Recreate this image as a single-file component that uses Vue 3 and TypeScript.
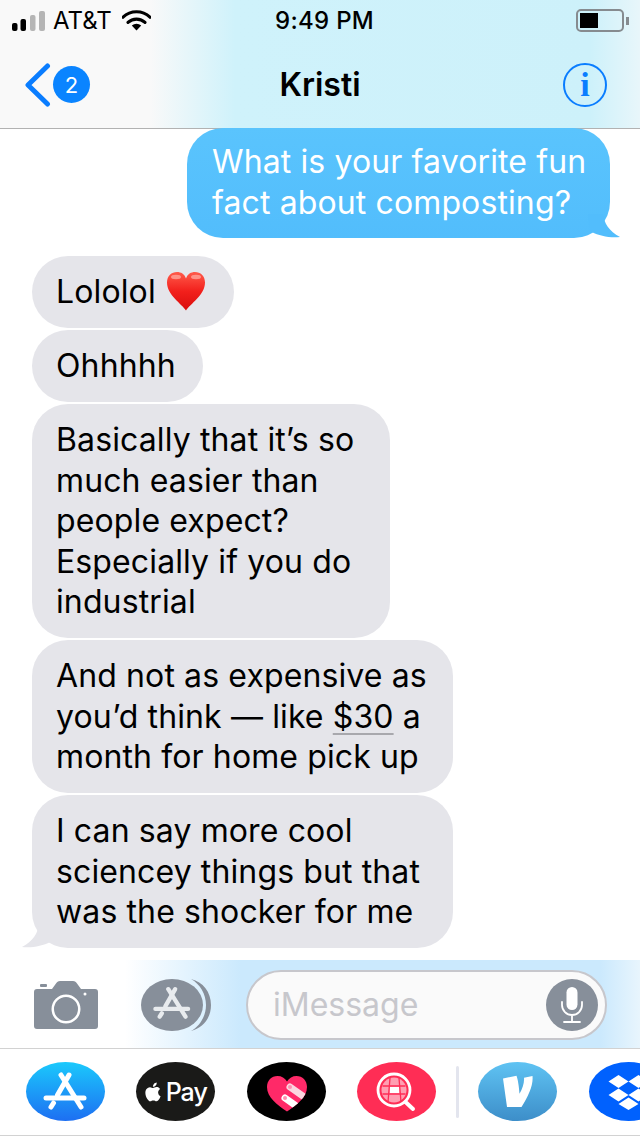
<template>
  <div class="phone">
    <header class="top">
      <div class="status">
        <div class="status-left">
          <svg class="signal" width="34" height="20" viewBox="0 0 34 20">
            <rect x="0" y="12" width="5.500" height="8" rx="2" fill="#000" />
            <rect x="8.500" y="8" width="5.500" height="12" rx="2" fill="#000" />
            <rect x="18" y="4" width="5.500" height="16" rx="2" fill="#b5b5b5" />
            <rect x="27" y="0" width="6" height="20" rx="2" fill="#b5b5b5" />
          </svg>
          <span class="carrier">AT&amp;T</span>
          <svg class="wifi" width="29" height="21" viewBox="0 0 29 21">
            <path d="M1 7.200a19.500 19.500 0 0 1 27 0" fill="none" stroke="#000" stroke-width="3.200" stroke-linecap="round" />
            <path d="M6 12.400a12.400 12.400 0 0 1 17 0" fill="none" stroke="#000" stroke-width="3.200" stroke-linecap="round" />
            <path d="M9.800 15.600a7 7 0 0 1 9.400 0L14.500 20.600z" fill="#000" />
          </svg>
        </div>
        <span class="time">9:49 PM</span>
        <div class="battery">
          <div class="battery-body"><div class="battery-fill" /></div>
          <div class="battery-nub" />
        </div>
      </div>
      <nav class="nav">
        <div class="back">
          <svg width="28" height="44" viewBox="0 0 28 44">
            <path d="M23.500 3 4 22l19.500 19" fill="none" stroke="#0a7dff" stroke-width="5" stroke-linecap="round" stroke-linejoin="round" />
          </svg>
          <span class="badge">2</span>
        </div>
        <div class="name">Kristi</div>
        <div class="info"><span>i</span></div>
      </nav>
    </header>

    <main class="thread">
      <div class="bubble sent">
        What is your favorite fun<br />fact about composting?
        <svg class="tail tail-right" width="32" height="24" viewBox="0 0 32 24">
          <path d="M0 0h15c1 9 6 17 17 23C22 24 11 22 4 18 2 16 0 8 0 0z" fill="#52bdfc" />
        </svg>
      </div>
      <div class="bubble got first">
        Lololol
        <svg class="heart" width="40" height="40" viewBox="0 0 40 40">
          <defs>
            <linearGradient id="heartFill" x1="0" y1="0" x2="0" y2="1">
              <stop offset="0" stop-color="#ff5a4a" />
              <stop offset="0.500" stop-color="#f2201c" />
              <stop offset="1" stop-color="#d90d0d" />
            </linearGradient>
          </defs>
          <path d="M20 39.500C16 33 1 24 1 11.500 1 5 5.500 1 11 1c4 0 7.500 2 9 6.500C21.500 3 25 1 29 1c5.500 0 10 4 10 10.500C39 24 24 33 20 39.500z" fill="url(#heartFill)" />
          <ellipse cx="10" cy="6" rx="5" ry="2.200" fill="#ffb0a6" opacity="0.700" />
          <ellipse cx="30" cy="6" rx="5" ry="2.200" fill="#ffb0a6" opacity="0.700" />
        </svg>
      </div>
      <div class="bubble got ohh">Ohhhhh</div>
      <div class="bubble got basically">
        Basically that it’s so<br />much easier than<br />people expect?<br />Especially if you do<br />industrial
      </div>
      <div class="bubble got wide">
        And not as expensive as<br />you’d think — like <span class="link">$30</span> a<br />month for home pick up
      </div>
      <div class="bubble got wide">
        I can say more cool<br />sciencey things but that<br />was the shocker for me
        <svg class="tail tail-left" width="32" height="24" viewBox="0 0 32 24">
          <path d="M32 0H17c-1 9-6 17-17 23 10 1 21-1 28-5 2-2 4-10 4-18z" fill="#e5e5ea" />
        </svg>
      </div>
    </main>

    <section class="composer">
      <svg class="camera" width="64" height="48" viewBox="0 0 64 48">
        <rect x="6" y="3" width="7" height="3" rx="1" fill="#878f9a" />
        <path fill-rule="evenodd" fill="#878f9a" d="M3 8h15l4-5.500C23 1 24 0 26 0h13c2 0 3 1 4 2.500L47 8h14a3 3 0 0 1 3 3v34a3 3 0 0 1-3 3H3a3 3 0 0 1-3-3V11a3 3 0 0 1 3-3zm29 5.500a14.500 14.500 0 1 0 0 29 14.500 14.500 0 0 0 0-29zm0 2.500a12 12 0 1 1 0 24 12 12 0 0 1 0-24zM51 11.500a1.500 1.500 0 1 0 0 3 1.500 1.500 0 0 0 0-3z" />
      </svg>
      <div class="apps-btn">
        <svg width="72" height="54" viewBox="0 0 72 54">
          <path d="M50 1c12 3 20 13 20 26S62 50 50 53c9-5 15-15 15-26S59 6 50 1z" fill="#878f9a" />
          <ellipse cx="31" cy="27" rx="31" ry="26" fill="#878f9a" />
          <g transform="translate(-2.800 0) scale(0.860)" stroke="#e8ebee" fill="none" stroke-linecap="round">
            <use href="#storeMark" />
          </g>
        </svg>
      </div>
      <div class="input">
        <span>iMessage</span>
        <div class="mic">
          <svg width="26" height="38" viewBox="0 0 26 38">
            <rect x="7.500" y="1" width="11" height="23" rx="5.500" fill="#fff" />
            <path d="M3 16v3a10 10 0 0 0 20 0v-3M13 29v7M5 36h16" fill="none" stroke="#fff" stroke-width="1.800" stroke-linecap="round" />
          </svg>
        </div>
      </div>
    </section>

    <section class="drawer">
      <div class="app store">
        <svg width="79" height="59" viewBox="0 0 79 59" stroke="#fff" fill="none" stroke-linecap="round">
          <g id="storeMark">
            <path d="M43 13 31.500 33" stroke-width="5" />
            <path d="M27.500 41 25 45" stroke-width="5" />
            <path d="M35 13l20 32" stroke-width="5" />
            <path d="M20 36h38" stroke-width="5" />
          </g>
        </svg>
      </div>
      <div class="app pay">
        <svg width="17" height="20" viewBox="3 1 18 22">
          <path fill="#fff" d="M17.050 12.540c-.03-2.600 2.130-3.850 2.220-3.910-1.210-1.770-3.100-2.010-3.770-2.040-1.600-.16-3.130.94-3.940.94-.81 0-2.070-.92-3.400-.89-1.750.03-3.360 1.020-4.260 2.580-1.820 3.150-.47 7.820 1.300 10.380.87 1.250 1.900 2.660 3.250 2.610 1.310-.05 1.800-.84 3.380-.84 1.580 0 2.020.84 3.400.82 1.400-.03 2.290-1.280 3.150-2.540.99-1.450 1.400-2.860 1.420-2.930-.03-.01-2.720-1.040-2.750-4.180zM14.450 4.890c.72-.87 1.200-2.080 1.070-3.290-1.040.04-2.300.69-3.040 1.560-.67.77-1.250 2-1.090 3.180 1.160.09 2.340-.59 3.060-1.450z" />
        </svg>
        <span>Pay</span>
      </div>
      <div class="app love">
        <svg width="79" height="59" viewBox="0 0 79 59">
          <defs>
            <clipPath id="heartClip">
              <path d="M40 49.500C30 43 20 35 20 25c0-6.500 4.500-11 10.500-11 4 0 7.500 2 9.500 5.500 2-3.500 5.500-5.500 9.500-5.500C55.500 14 60 18.500 60 25c0 10-10 18-20 24.500z" />
            </clipPath>
          </defs>
          <path d="M40 49.500C30 43 20 35 20 25c0-6.500 4.500-11 10.500-11 4 0 7.500 2 9.500 5.500 2-3.500 5.500-5.500 9.500-5.500C55.500 14 60 18.500 60 25c0 10-10 18-20 24.500z" fill="#ff2968" />
          <g clip-path="url(#heartClip)" stroke-linecap="round" stroke-width="7" fill="none">
            <path d="M43 25l17 12" stroke="#fbd6e0" />
            <path d="M38 36l17 12" stroke="#fff" />
          </g>
          <circle cx="43" cy="25" r="2" fill="#ff8fb0" />
          <circle cx="38" cy="36" r="2" fill="#ff8fb0" />
        </svg>
      </div>
      <div class="app search">
        <svg width="79" height="59" viewBox="0 0 79 59">
          <circle cx="37" cy="28" r="16" fill="none" stroke="#fff" stroke-width="2.800" />
          <path d="M48.500 40 56 47" stroke="#fff" stroke-width="4" stroke-linecap="round" />
          <circle cx="37" cy="28" r="12.500" fill="#ff9fb2" />
          <path d="M25.500 24h23M25.500 32h23M33 16l-2 24M42 16l2 24" stroke="#ff2d55" stroke-width="1.300" fill="none" />
          <rect x="33" y="25" width="9" height="6" fill="#fff" />
        </svg>
      </div>
      <div class="divider" />
      <div class="app venmo">
        <svg width="79" height="59" viewBox="0 0 79 59">
          <path d="M25 16.500 38.500 13.700c1.500 4 2.500 11 3 18 3-5 5-11 4.500-16l8.500-1.800c1 9-4 20-11 31.100H29z" fill="#fff" />
        </svg>
      </div>
      <div class="app dropbox">
        <svg width="79" height="59" viewBox="0 0 79 59">
          <path fill="#fff" d="M29.500 13l10 6.500-10 6.500-10-6.500zM49.500 13l10 6.500-10 6.500-10-6.500zM29.500 26.500l10 6.500-10 6.500-10-6.500zM49.500 26.500l10 6.500-10 6.500-10-6.500zM39.500 35.500l10 6.500-10 6-10-6z" />
        </svg>
      </div>
    </section>
  </div>
</template>

<script setup lang="ts">
</script>

<style>
html,
body {
  margin: 0;
  background: #fff;
}
</style>

<style scoped>
.phone {
  width: 640px;
  height: 1136px;
  overflow: hidden;
  display: flex;
  flex-direction: column;
  background: #fff;
  color: #000;
  font-family: Inter, "Liberation Sans", sans-serif;
}

.top {
  height: 128px;
  flex: none;
  box-sizing: content-box;
  border-bottom: 1px solid #b2b2b2;
  background: linear-gradient(90deg, #f9f9f9 0, #f9f9f9 150px, #cff2fb 235px, #cdf1fa 590px, #e8f6fa 640px);
}

.status {
  height: 41px;
  position: relative;
  display: flex;
  align-items: center;
  justify-content: space-between;
  padding: 0 11px 0 12px;
}

.status-left {
  display: flex;
  align-items: center;
}

.signal {
  margin-right: 7px;
}

.carrier {
  font-size: 24px;
  margin-right: 10px;
}

.time {
  position: absolute;
  left: 275px;
  font-size: 24px;
  font-weight: 500;
  letter-spacing: 0.3px;
}

.battery {
  display: flex;
  align-items: center;
  gap: 2px;
}

.battery-body {
  width: 48px;
  height: 23px;
  box-sizing: border-box;
  border: 2px solid #868b8f;
  border-radius: 5px;
  padding: 2px;
}

.battery-fill {
  width: 18px;
  height: 100%;
  background: #000;
}

.battery-nub {
  width: 3px;
  height: 8px;
  background: #868b8f;
}

.nav {
  height: 87px;
  display: flex;
  align-items: center;
  justify-content: space-between;
  padding: 0 33px;
}

.back {
  width: 53px;
  margin-left: -9px;
  display: flex;
  align-items: center;
  gap: 1px;
}

.back svg {
  flex: none;
}

.badge {
  width: 37px;
  height: 37px;
  flex: none;
  border-radius: 50%;
  background: #0a84ff;
  color: #fff;
  font-size: 22px;
  display: flex;
  align-items: center;
  justify-content: center;
}

.name {
  font-size: 32px;
  font-weight: 600;
}

.info {
  width: 44px;
  height: 44px;
  box-sizing: border-box;
  border: 2px solid #0a7dff;
  border-radius: 50%;
  color: #0a7dff;
  font: bold 34px "Liberation Serif", serif;
  display: flex;
  align-items: center;
  justify-content: center;
}

.thread {
  flex: 1;
  display: flex;
  flex-direction: column;
  align-items: flex-start;
  gap: 2px;
  padding: 0 32px;
  box-sizing: border-box;
  font-size: 32px;
  letter-spacing: 0.12px;
}

.bubble {
  position: relative;
  box-sizing: border-box;
  padding: 16px 25px 15.500px 24px;
  line-height: 40.500px;
  white-space: nowrap;
  border-radius: 36px;
}

.sent {
  align-self: flex-end;
  width: 423px;
  margin-right: -2px;
  margin-top: -1px;
  padding: 14px 0 15px 25px;
  background: linear-gradient(#5ac4fd, #52bdfc);
  color: #fff;
}

.got {
  background: #e5e5ea;
}

.first {
  width: 202px;
  margin-top: 16px;
  display: flex;
  align-items: center;
}

.ohh {
  width: 171px;
}

.basically {
  width: 358px;
}

.wide {
  width: 421px;
}

.heart {
  flex: none;
  margin-left: 10px;
  margin-top: -2px;
}

.link {
  text-decoration: underline;
  text-decoration-color: #a8a8ad;
  text-decoration-thickness: 2px;
  text-underline-offset: 5px;
}

.tail {
  position: absolute;
  bottom: 0;
}

.tail-right {
  right: -10px;
}

.tail-left {
  left: -10px;
}

.composer {
  height: 89px;
  flex: none;
  box-sizing: border-box;
  display: flex;
  align-items: center;
  padding: 1px 0 0 34px;
  background: linear-gradient(90deg, #fff 0, #fff 125px, #cbe9fd 240px, #cbe9fd 600px, #e8f5fd 640px);
  border-bottom: 1px solid #d2d2d2;
}

.apps-btn {
  margin-left: 43px;
  display: flex;
  margin-right: 33px;
}

.input {
  width: 361px;
  height: 70px;
  box-sizing: border-box;
  border: 2px solid #c7c7cc;
  border-radius: 35px;
  background: #fafafa;
  display: flex;
  align-items: center;
  justify-content: space-between;
  padding: 0 7px 0 25px;
  color: #c7c7cc;
  font-size: 32px;
}

.mic {
  width: 52px;
  height: 52px;
  border-radius: 50%;
  background: #878f9a;
  display: flex;
  align-items: center;
  justify-content: center;
}

.drawer {
  height: 87px;
  flex: none;
  box-sizing: border-box;
  border-bottom: 1px solid #d2d2d2;
  display: flex;
  align-items: center;
  padding: 0 0 1px 26px;
  gap: 31.25px;
}

.app {
  width: 79px;
  height: 59px;
  flex: none;
  border-radius: 50%;
  display: flex;
  align-items: center;
  justify-content: center;
}

.store {
  background: linear-gradient(#1bc9fc, #1d6ff2);
}

.pay {
  background: #1a1a18;
  color: #fff;
  font-size: 25px;
  font-weight: 500;
  letter-spacing: -1px;
  gap: 4px;
}

.love {
  background: #000;
}

.search {
  background: #ff2d55;
}

.divider {
  width: 3px;
  height: 52px;
  flex: none;
  background: #e3e5ee;
  border-radius: 2px;
  margin: 0 -12px 0 -11px;
}

.venmo {
  background: linear-gradient(#5fc3f3, #3d8ec9);
}

.dropbox {
  background: #0061fe;
}
</style>
